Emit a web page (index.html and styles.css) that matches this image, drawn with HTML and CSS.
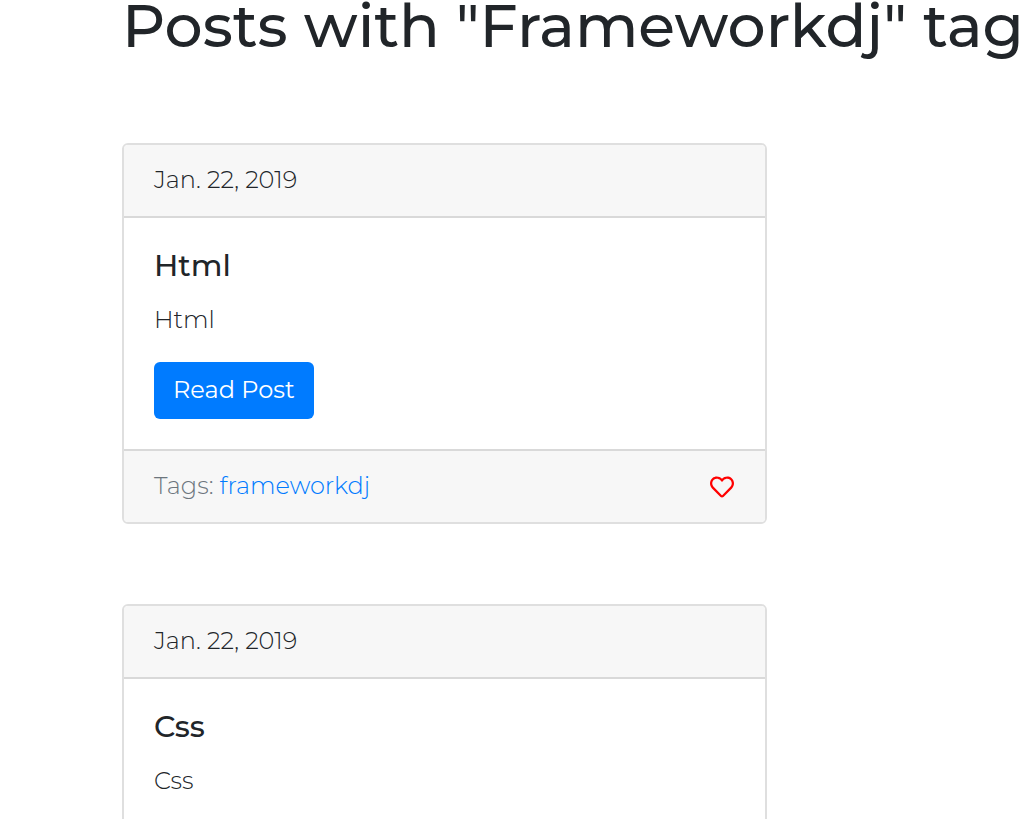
FILE: index.html
```html
<!DOCTYPE html>
<html lang="en">
<head>
<meta charset="utf-8">
<title>Posts with "Frameworkdj" tag</title>
<link rel="stylesheet" href="styles.css">
</head>
<body>
<main class="page">
  <h1 class="title">Posts with "Frameworkdj" tag</h1>
  <div class="posts">
    <article class="card">
      <header class="card-header">Jan. 22, 2019</header>
      <div class="card-body">
        <h2 class="card-title">Html</h2>
        <p class="card-text">Html</p>
        <a class="btn" href="#">Read Post</a>
      </div>
      <footer class="card-footer">
        <span>Tags: <a class="tag" href="#">frameworkdj</a></span>
        <button class="like" type="button" aria-label="Like">
          <svg class="heart" viewBox="0 0 512 512" aria-hidden="true"><path fill="currentColor" d="M458.400 64.300C400.600 15.700 311.300 23 256 79.300 200.700 23 111.400 15.600 53.600 64.300-21.600 127.600-10.600 230.800 43 285.500l175.400 178.700c10 10.200 23.400 15.900 37.600 15.900 14.300 0 27.600-5.600 37.600-15.800L469 285.600c53.500-54.700 64.700-157.900-10.600-221.300zm-23.600 187.500L259.400 430.500c-2.400 2.400-4.400 2.400-6.800 0L77.200 251.800c-36.500-37.200-43.900-107.600 7.300-150.700 38.900-32.700 98.900-27.800 136.500 10.500l35 35.700 35-35.700c37.800-38.500 97.800-43.200 136.500-10.600 51.100 43.100 43.500 113.900 7.300 150.800z"/></svg>
        </button>
      </footer>
    </article>
    <article class="card">
      <header class="card-header">Jan. 22, 2019</header>
      <div class="card-body">
        <h2 class="card-title">Css</h2>
        <p class="card-text">Css</p>
      </div>
    </article>
  </div>
</main>
</body>
</html>
```
FILE: styles.css
```css
* { box-sizing: border-box; }
html { overflow: hidden; }
body {
  margin: 0;
  background: #fff;
  color: #212529;
  font: 300 24px/36px Montserrat, "Open Sans", sans-serif;
}
.page { padding: 0 0 0 122px; }
.title {
  margin: 0 0 91px;
  font: 500 60px/52px Montserrat, Inter, sans-serif;
  white-space: nowrap;
}
.posts { display: grid; gap: 80px; width: 72%; max-width: 645px; }
.card { border: 2px solid #dfdfdf; border-radius: 6px; background: #fff; }
.card-header {
  padding: 17px 30px 18px;
  background: #f7f7f7;
  border-bottom: 2px solid #d9d9d9;
  border-radius: 4px 4px 0 0;
}
.card-body { padding: 30px; }
.card-title { margin: 0 0 18px; font: 500 30px/36px Montserrat, Inter, sans-serif; }
.card-text { margin: 0 0 24px; }
.btn {
  display: inline-block;
  padding: 10px 19px 11px;
  border-radius: 6px;
  background: #007bff;
  color: #fff;
  font-weight: 400;
  text-decoration: none;
}
.card-footer {
  display: flex;
  justify-content: space-between;
  align-items: center;
  padding: 17px 30px 18px;
  background: #f7f7f7;
  border-top: 2px solid #d9d9d9;
  border-radius: 0 0 4px 4px;
  color: #6c757d;
}
.tag { color: #007bff; text-decoration: none; }
.like { display: flex; padding: 2px 1px 0; border: 0; background: none; color: #f00; cursor: pointer; }
.heart { width: 24px; height: 24px; }
```
